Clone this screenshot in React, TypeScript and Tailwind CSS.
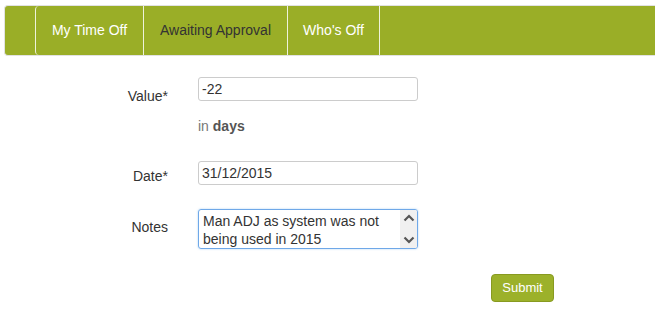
import { useState } from "react";

const tabs = [
  { label: "My Time Off", width: "w-[108px]", active: false },
  { label: "Awaiting Approval", width: "w-[144px]", active: true },
  { label: "Who's Off", width: "w-[92px]", active: false },
];

export default function App() {
  const [value, setValue] = useState("-22");
  const [date, setDate] = useState("31/12/2015");

  return (
    <div className="w-[655px] h-[325px] bg-white pt-[5px] pl-[4px] font-['Liberation_Sans',Arial,sans-serif] text-[14px] text-[#333]">
      {/* nav bar */}
      <div className="flex h-[51px] border border-r-0 border-[#e2e2e2] rounded-l-[4px] bg-[#9aae27]">
        <div className="w-[30px]" />
        {tabs.map((t) => (
          <a
            key={t.label}
            className={`flex ${t.width} items-center justify-center border-l-[1.5px] border-[#eef2dc] ${
              t.label === "My Time Off" ? "rounded-l-[4px]" : ""
            } ${t.active ? "text-[#333]" : "text-white"}`}
          >
            {t.label}
          </a>
        ))}
        <div className="border-l-[1.5px] border-[#eef2dc]" />
      </div>

      {/* form */}
      <form className="mt-[21px] flex flex-col" onSubmit={(e) => e.preventDefault()}>
        <div className="flex h-[24px] items-start">
          <label className="w-[164px] pt-[9px] text-right leading-[20px]">Value*</label>
          <input
            value={value}
            onChange={(e) => setValue(e.target.value)}
            className="ml-[30px] h-[24px] w-[220px] rounded-[3px] border border-[#cccccc] px-[3px] text-[14px] text-[#333] outline-none"
          />
        </div>

        <div className="ml-[194px] mt-[15px] leading-[20px] text-[#777]">
          in <b className="text-[#555]">days</b>
        </div>

        <div className="mt-[25px] flex h-[24px] items-start">
          <label className="w-[164px] pt-[5px] text-right leading-[20px]">Date*</label>
          <input
            value={date}
            onChange={(e) => setDate(e.target.value)}
            className="ml-[30px] h-[24px] w-[220px] rounded-[3px] border border-[#cccccc] px-[3px] text-[14px] text-[#333] outline-none"
          />
        </div>

        <div className="mt-[24px] flex h-[40px] items-start">
          <label className="w-[164px] pt-[8px] text-right leading-[20px]">Notes</label>
          <div className="ml-[30px] flex h-[40px] w-[220px] overflow-hidden rounded-[3px] border border-[#6fa8e8] shadow-[0_0_2px_rgba(102,175,233,0.6)]">
            <textarea
              readOnly
              value={"Man ADJ as system was not being used in 2015"}
              className="h-full flex-1 resize-none overflow-hidden pl-[4px] pr-[3px] pt-[2px] text-[14px] leading-[18px] text-[#333] outline-none"
            />
            <div className="flex w-[17px] flex-col items-center justify-between bg-[#f0f0f0] py-[3px]">
              <svg width="12" height="9" viewBox="0 0 12 9">
                <path d="M1.5 7.5 L6 3 L10.5 7.5" fill="none" stroke="#555" strokeWidth="2.2" />
              </svg>
              <svg width="12" height="9" viewBox="0 0 12 9">
                <path d="M1.5 1.5 L6 6 L10.5 1.5" fill="none" stroke="#555" strokeWidth="2.2" />
              </svg>
            </div>
          </div>
        </div>

        <div className="mt-[25px] flex">
          <button
            type="submit"
            className="ml-[487px] h-[28px] w-[63px] rounded-[4px] border border-[#889a20] bg-[#9cb12a] text-[13px] text-white"
          >
            Submit
          </button>
        </div>
      </form>
    </div>
  );
}
